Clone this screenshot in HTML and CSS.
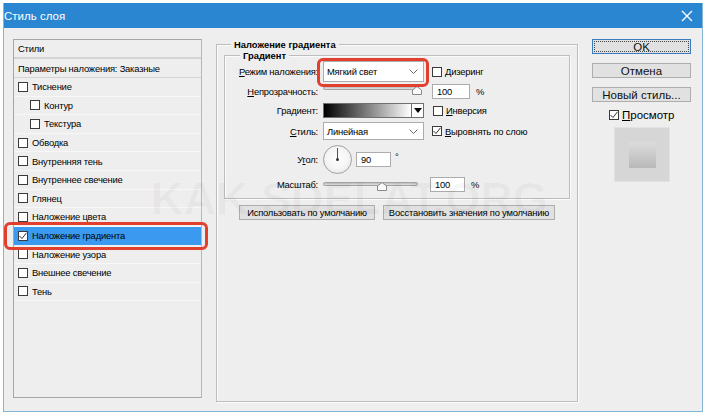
FILE: index.html
```html
<!DOCTYPE html>
<html lang="ru">
<head>
<meta charset="utf-8">
<title>Стиль слоя</title>
<link rel="stylesheet" href="styles.css">
</head>
<body>
<div class="window">
  <div class="titlebar">
    <span class="title">Стиль слоя</span>
    <svg class="close" width="12" height="12" viewBox="0 0 12 12"><path d="M1 1L11 11M11 1L1 11" stroke="#fff" stroke-width="1.3" fill="none"/></svg>
  </div>
  <div class="content">
    <div class="styles">
      <div class="ph ph1">Стили</div>
      <div class="ph">Параметры наложения: Заказные</div>
      <div class="item"><span class="cb"></span>Тиснение</div>
      <div class="item sub"><span class="cb"></span>Контур</div>
      <div class="item sub"><span class="cb"></span>Текстура</div>
      <div class="item"><span class="cb"></span>Обводка</div>
      <div class="item"><span class="cb"></span>Внутренняя тень</div>
      <div class="item"><span class="cb"></span>Внутреннее свечение</div>
      <div class="item"><span class="cb"></span>Глянец</div>
      <div class="item"><span class="cb"></span>Наложение цвета</div>
      <div class="item sel"><span class="cb"><svg width="8" height="8" viewBox="0 0 8 8"><path d="M0.5 4L3 6.5L7.5 0.8" stroke="#333" stroke-width="1" fill="none"/></svg></span>Наложение градиента</div>
      <div class="item"><span class="cb"></span>Наложение узора</div>
      <div class="item"><span class="cb"></span>Внешнее свечение</div>
      <div class="item"><span class="cb"></span>Тень</div>
    </div>

    <div class="mid">
      <div class="group outer">
        <span class="legend">Наложение градиента</span>
        <div class="group inner">
          <span class="legend">Градиент</span>
          <div class="row r1">
            <span class="lbl"><u>Р</u>ежим наложения:</span>
            <div class="select"><span>Мягкий свет</span><svg width="9" height="5" viewBox="0 0 9 5"><path d="M0.5 0.5L4.5 4.5L8.5 0.5" stroke="#666" fill="none"/></svg></div>
            <span class="cb cbm"></span><span class="ctext">Дизеринг</span>
          </div>
          <div class="row r2">
            <span class="lbl"><u>Н</u>епрозрачность:</span>
            <div class="slider s1"><div class="track"></div><svg class="thumb" style="left:89px" width="10" height="9" viewBox="0 0 10 9"><path d="M0.5 8.5V4L5 0.5L9.5 4V8.5Z" fill="#fafafa" stroke="#8a8a8a"/></svg></div>
            <div class="input i1">100</div><span class="pct">%</span>
          </div>
          <div class="row r3">
            <span class="lbl">Градиент:</span>
            <div class="grad"><div class="gbar"></div><div class="garrow"><svg width="8" height="5" viewBox="0 0 8 5"><path d="M0 0H8L4 5Z" fill="#000"/></svg></div></div>
            <span class="cb cbm"></span><span class="ctext"><u>И</u>нверсия</span>
          </div>
          <div class="row r4">
            <span class="lbl"><u>С</u>тиль:</span>
            <div class="select"><span>Линейная</span><svg width="9" height="5" viewBox="0 0 9 5"><path d="M0.5 0.5L4.5 4.5L8.5 0.5" stroke="#666" fill="none"/></svg></div>
            <span class="cb cbm"><svg width="8" height="8" viewBox="0 0 8 8"><path d="M0.5 4L3 6.5L7.5 0.8" stroke="#333" stroke-width="1" fill="none"/></svg></span><span class="ctext"><u>В</u>ыровнять по слою</span>
          </div>
          <div class="row r5">
            <span class="lbl">У<u>г</u>ол:</span>
            <div class="dial"><div class="hand"></div><div class="dot"></div></div>
            <div class="input i2">90</div><span class="deg">°</span>
          </div>
          <div class="row r6">
            <span class="lbl">Масштаб:</span>
            <div class="slider s2"><div class="track"></div><svg class="thumb" style="left:54px" width="10" height="9" viewBox="0 0 10 9"><path d="M0.5 8.5V4L5 0.5L9.5 4V8.5Z" fill="#fafafa" stroke="#8a8a8a"/></svg></div>
            <div class="input i3">100</div><span class="pct">%</span>
          </div>
        </div>
        <div class="btnrow">
          <div class="btn b1">Использовать по умолчанию</div>
          <div class="btn b2">Восстановить значения по умолчанию</div>
        </div>
      </div>
    </div>

    <div class="right">
      <div class="rbtn ok"><span>OK</span></div>
      <div class="rbtn">Отмена</div>
      <div class="rbtn">Новый стиль...</div>
      <div class="preview-check"><span class="cb"><svg width="8" height="8" viewBox="0 0 8 8"><path d="M0.5 4L3 6.5L7.5 0.8" stroke="#333" stroke-width="1" fill="none"/></svg></span><span><u>П</u>росмотр</span></div>
      <div class="preview"><div class="pinner"></div></div>
    </div>
  </div>
  <div class="watermark">KAK SDELAT.ORG</div>
</div>
<div class="hl hl1"></div>
<div class="hl hl2"></div>
</body>
</html>
```
FILE: styles.css
```css
* { box-sizing: border-box; }
html, body { margin: 0; padding: 0; background: #ffffff; }
body {
  position: relative;
  width: 706px;
  height: 412px;
  overflow: hidden;
  font-family: "Liberation Sans", Arial, sans-serif;
  font-size: 9.4px;
  letter-spacing: -0.2px;
  color: #000;
}
u { text-decoration: underline; }

.window {
  position: relative;
  margin: 3px 0 0 3px;
  width: 700px;
  height: 409px;
  background: #eeeeee;
  border: 1px solid #86b6d6;
  border-top: none;
}
.titlebar {
  height: 25px;
  background: #2a86d1;
  color: #fff;
  display: flex;
  align-items: center;
  justify-content: space-between;
  padding: 0 9px 0 0;
  font-size: 11.5px;
  letter-spacing: 0;
}

.content {
  display: flex;
  align-items: flex-start;
  padding: 11px 0 0 9px;
}

/* left styles list */
.styles {
  width: 189px;
  height: 359px;
  border: 1px solid #a6a6a6;
  border-right-color: #b8b8b8;
  background: #eeeeee;
}
.ph {
  height: 19px;
  padding-left: 4px;
  display: flex;
  align-items: center;
  border-bottom: 1px solid #d4d4d4;
}
.ph1 { border-bottom: 2px solid #d4d4d4; }
.item {
  height: 18.6px;
  display: flex;
  align-items: center;
  padding-left: 4px;
  border-bottom: 1px solid #f7f7f7;
}
.item.sub { padding-left: 16px; }
.item.sel { background: #3b9af0; border-bottom-color: #3b9af0; }
.cb {
  width: 10px;
  height: 10px;
  border: 1px solid #3a3a3a;
  background: #fff;
  margin-right: 4px;
  display: inline-flex;
  align-items: center;
  justify-content: center;
  flex: none;
}

/* middle */
.mid { margin-left: 14px; margin-top: 5px; }
.group {
  position: relative;
  border: 1px solid #bdbdbd;
  box-shadow: inset 1px 1px 0 #fbfbfb, 1px 1px 0 #fbfbfb;
}
.outer { width: 362px; height: 358px; }
.inner {
  width: 346px;
  margin: 10px 0 0 7px;
  padding: 5px 0 6px 0;
}
.legend {
  position: absolute;
  top: -7px;
  padding: 0 3px;
  background: #eeeeee;
  font-weight: bold;
  line-height: 13px;
  letter-spacing: 0;
}
.outer > .legend { left: 14px; }
.inner > .legend { left: 15px; }

.row { display: flex; align-items: center; }
.lbl { width: 93px; margin-right: 5px; text-align: right; white-space: nowrap; }
.r1 { height: 21px; }
.r2 { height: 16px; margin-top: 1px; }
.r3 { height: 15px; margin-top: 4px; }
.r4 { height: 18px; margin-top: 4px; }
.r5 { height: 30px; margin-top: 4px; }
.r6 { height: 15px; margin-top: 3px; }

.select {
  width: 101px;
  height: 100%;
  background: #fff;
  border: 1px solid #acacac;
  display: flex;
  align-items: center;
  justify-content: space-between;
  padding: 0 5px 0 3px;
}
.cbm { margin-left: 8px; margin-right: 3px; }
.r3 .cbm { margin-left: 9px; }
.ctext { white-space: nowrap; }

.slider { position: relative; height: 16px; }
.s1 { width: 96px; }
.s2 { width: 95px; height: 15px; }
.track {
  margin-top: 3px;
  height: 4px;
  border: 1px solid #a3a3a3;
  border-radius: 2px;
  background: linear-gradient(#bcbcbc, #e2e2e2);
}
.s2 .track { margin-top: 5px; }
.thumb { position: absolute; top: 3px; }
.s2 .thumb { top: 5px; }

.input {
  height: 15px;
  background: #fff;
  border: 1px solid #acacac;
  padding-left: 4px;
  display: flex;
  align-items: center;
}
.i1 { width: 38px; margin-left: 13px; }
.i2 { width: 35px; margin-left: 4px; height: 15px; }
.i3 { width: 35px; margin-left: 12px; }
.pct { margin-left: 6px; }
.deg { margin-left: 4px; align-self: flex-start; margin-top: 7px; }

.grad {
  width: 101px;
  height: 15px;
  border: 1px solid #6f6f6f;
  display: flex;
}
.gbar { flex: 1; background: linear-gradient(to right, #000, #fff); }
.garrow {
  width: 12px;
  background: #fff;
  border-left: 1px solid #6f6f6f;
  display: flex;
  align-items: center;
  justify-content: center;
}

.dial {
  position: relative;
  width: 29px;
  height: 29px;
  border-radius: 50%;
  border: 1px solid #a2a2a2;
  background: radial-gradient(circle at 50% 45%, #ffffff 0%, #f4f4f4 55%, #dcdcdc 100%);
}
.hand {
  position: absolute;
  left: 13px;
  top: 2px;
  width: 1px;
  height: 12px;
  background: #555;
}
.dot {
  position: absolute;
  left: 12px;
  top: 12px;
  width: 3px;
  height: 3px;
  border-radius: 50%;
  background: #333;
}

.btnrow { display: flex; gap: 8px; margin: 6px 0 0 22px; }
.btn {
  height: 15px;
  background: #e1e1e1;
  border: 1px solid #adadad;
  display: flex;
  align-items: center;
  justify-content: center;
  white-space: nowrap;
}
.b1 { width: 136px; }
.b2 { width: 172px; }

/* right */
.right { margin-left: 14px; width: 99px; display: flex; flex-direction: column; }
.rbtn {
  height: 15px;
  margin-bottom: 9px;
  background: #e1e1e1;
  border: 1px solid #adadad;
  display: flex;
  align-items: center;
  justify-content: center;
  font-size: 11.5px;
  letter-spacing: 0;
  color: #111;
}
.rbtn.ok { border-color: #3a7dbf; padding: 1px; }
.rbtn.ok span {
  width: 100%;
  height: 100%;
  border: 1px dotted #444;
  display: flex;
  align-items: center;
  justify-content: center;
}
.preview-check {
  display: flex;
  align-items: center;
  margin: -2px 0 0 17px;
  height: 12px;
  font-size: 11.5px;
  letter-spacing: 0;
}
.preview-check .cb { margin-right: 3px; }
.preview {
  margin: 6px 0 0 22px;
  width: 56px;
  height: 55px;
  background: #d6d6d6;
  border: 1px solid #e2e2e2;
  display: flex;
  align-items: center;
  justify-content: center;
}
.pinner {
  width: 27px;
  height: 26px;
  background: linear-gradient(#dcdcdc, #b9b9b9);
}

.watermark {
  position: absolute;
  left: 147px;
  top: 170px;
  font-size: 45px;
  font-weight: bold;
  letter-spacing: 0;
  color: rgba(0, 0, 0, 0.03);
  white-space: nowrap;
  pointer-events: none;
}

.hl {
  position: absolute;
  border: 3px solid #e2402f;
  border-radius: 6px;
  pointer-events: none;
}
.hl1 { left: 4px; top: 222px; width: 204px; height: 28px; }
.hl2 { left: 317px; top: 58px; width: 112px; height: 29px; }
```
